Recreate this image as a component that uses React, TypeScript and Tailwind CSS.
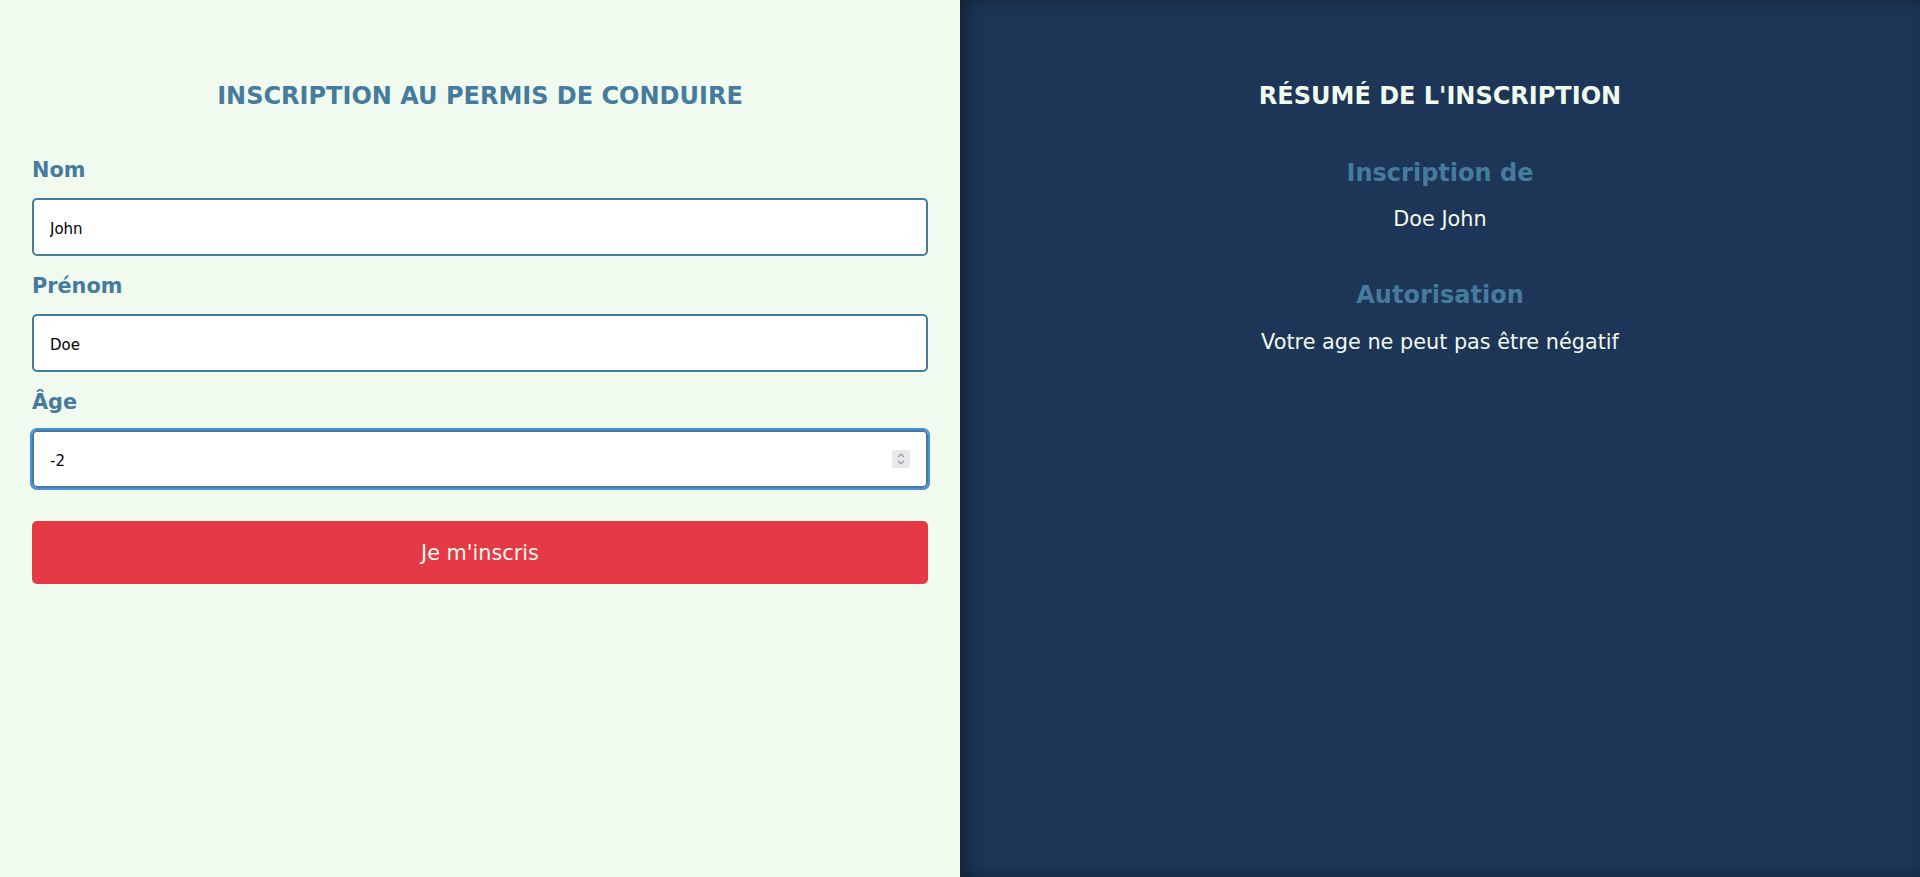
import { useState } from 'react';

const FONT = { fontFamily: '"DejaVu Sans", Verdana, sans-serif' };

export default function App() {
  const [nom, setNom] = useState('John');
  const [prenom, setPrenom] = useState('Doe');
  const [age, setAge] = useState('-2');

  const ageNum = Number(age);
  const autorisation =
    ageNum < 0 ? 'Votre age ne peut pas être négatif' : ageNum >= 18 ? 'Vous pouvez passer le permis' : 'Vous êtes trop jeune';

  return (
    <div className="flex min-h-[877px] w-full" style={FONT}>
      {/* Formulaire */}
      <div className="w-1/2 bg-[#f1faee] px-8 pt-[80px]">
        <h1 className="text-center text-2xl leading-8 font-bold text-[#457b9d]">INSCRIPTION AU PERMIS DE CONDUIRE</h1>

        <form className="mt-[44px] flex flex-col" onSubmit={(e) => e.preventDefault()}>
          <label className="mb-[14px] block text-[20.8px] leading-7 font-bold text-[#457b9d]">Nom</label>
          <input
            type="text"
            value={nom}
            onChange={(e) => setNom(e.target.value)}
            className="h-[58px] w-full rounded-[5px] border-2 border-[#457b9d] bg-white px-4 pt-[3px] text-[15px] text-black outline-none"
          />

          <label className="mt-4 mb-[14px] block text-[20.8px] leading-7 font-bold text-[#457b9d]">Prénom</label>
          <input
            type="text"
            value={prenom}
            onChange={(e) => setPrenom(e.target.value)}
            className="h-[58px] w-full rounded-[5px] border-2 border-[#457b9d] bg-white px-4 pt-[3px] text-[15px] text-black outline-none"
          />

          <label className="mt-4 mb-[14px] block text-[20.8px] leading-7 font-bold text-[#457b9d]">Âge</label>
          <div className="relative">
            <input
              type="number"
              value={age}
              onChange={(e) => setAge(e.target.value)}
              className="h-[58px] w-full rounded-[5px] border-2 border-[#457b9d] bg-white px-4 pt-[3px] text-[15px] text-black outline-2 outline-offset-0 outline-[#4a8fdb] [appearance:textfield] [&::-webkit-inner-spin-button]:appearance-none [&::-webkit-outer-spin-button]:appearance-none"
            />
            {/* spinner */}
            <span className="pointer-events-none absolute top-1/2 right-[18px] flex h-[18px] w-[18px] -translate-y-1/2 flex-col items-center justify-center gap-[2px] rounded-[2px] bg-[#e9e9ed]">
              <svg width="8" height="5" viewBox="0 0 8 5" fill="none" stroke="#8f8f9d" strokeWidth="1.2">
                <path d="M1 4.2 L4 1.2 L7 4.2" />
              </svg>
              <svg width="8" height="5" viewBox="0 0 8 5" fill="none" stroke="#8f8f9d" strokeWidth="1.2">
                <path d="M1 0.8 L4 3.8 L7 0.8" />
              </svg>
            </span>
          </div>

          <button
            type="submit"
            className="mt-[33px] h-[63px] w-full rounded-[5px] bg-[#e63946] pt-[3px] text-[20.8px] text-[#f1faee]"
          >
            Je m'inscris
          </button>
        </form>
      </div>

      {/* Résumé */}
      <div className="w-1/2 bg-[#1d3557] pt-[80px] text-center shadow-[inset_8px_0_16px_rgba(0,0,0,0.35)]">
        <h1 className="text-2xl leading-8 font-bold text-[#f1faee]">RÉSUMÉ DE L'INSCRIPTION</h1>

        <div className="mt-[45px]">
          <h2 className="mb-[15px] text-2xl leading-8 font-bold text-[#457b9d]">Inscription de</h2>
          <p className="text-[20.8px] leading-[31px] text-[#f1faee]">
            {prenom} {nom}
          </p>
        </div>

        <div className="mt-[44px]">
          <h2 className="mb-[16px] text-2xl leading-8 font-bold text-[#457b9d]">Autorisation</h2>
          <p className="text-[20.8px] leading-[31px] text-[#f1faee]">{autorisation}</p>
        </div>
      </div>
    </div>
  );
}
